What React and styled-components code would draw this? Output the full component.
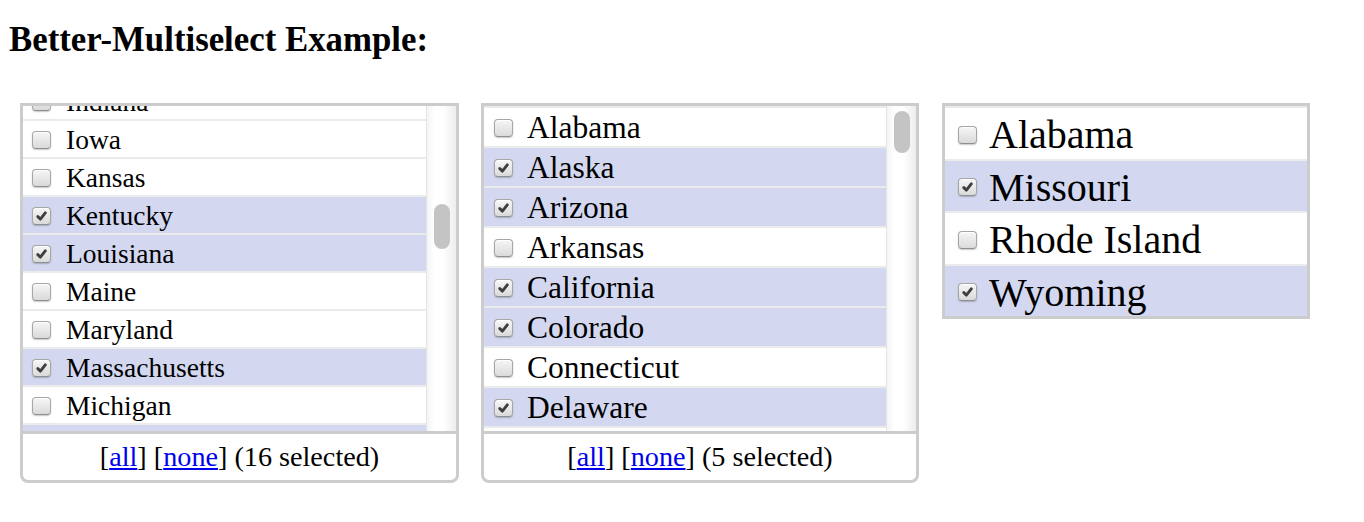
import React, { useLayoutEffect, useRef } from "react";
import styled, { createGlobalStyle } from "styled-components";

const GlobalStyle = createGlobalStyle`
  html, body { margin: 0; padding: 0; background: #ffffff; }
  body {
    font-family: "Liberation Serif", "Times New Roman", serif;
    color: #000000;
  }
`;

const STATES = [
  "Alabama", "Alaska", "Arizona", "Arkansas", "California", "Colorado",
  "Connecticut", "Delaware", "District of Columbia", "Florida", "Georgia",
  "Hawaii", "Idaho", "Illinois", "Indiana", "Iowa", "Kansas", "Kentucky",
  "Louisiana", "Maine", "Maryland", "Massachusetts", "Michigan", "Minnesota",
  "Mississippi", "Missouri", "Montana", "Nebraska", "Nevada", "New Hampshire",
  "New Jersey", "New Mexico", "New York", "North Carolina", "North Dakota",
  "Ohio", "Oklahoma", "Oregon", "Pennsylvania", "Rhode Island",
  "South Carolina", "South Dakota", "Tennessee", "Texas", "Utah", "Vermont",
  "Virginia", "Washington", "West Virginia", "Wisconsin", "Wyoming",
];

const LEFT_SELECTED = new Set([
  "Alaska", "California", "Florida", "Georgia", "Kentucky", "Louisiana",
  "Massachusetts", "Minnesota", "New York", "Ohio", "Oregon", "Texas",
  "Utah", "Vermont", "Washington", "Wyoming",
]);
const MIDDLE_SELECTED = new Set(["Alaska", "Arizona", "California", "Colorado", "Delaware"]);
const RIGHT_OPTIONS = ["Alabama", "Missouri", "Rhode Island", "Wyoming"];
const RIGHT_SELECTED = new Set(["Missouri", "Wyoming"]);

const Page = styled.div`
  padding: 20px 0 0 9px;
`;

const Title = styled.h2`
  margin: 0 0 43px;
  font-size: 34.8px;
  font-weight: bold;
  line-height: normal;
`;

const PanelRow = styled.div`
  display: flex;
  align-items: flex-start;
  padding-left: 11px;
`;

const Panel = styled.div`
  box-sizing: border-box;
  width: ${(p) => p.$width}px;
  margin-right: ${(p) => p.$gap || 0}px;
  border: 3px solid #cccccc;
  border-radius: ${(p) => (p.$rounded ? "0 0 8px 8px" : "0")};
  background: #ffffff;
  overflow: hidden;
`;

const Viewport = styled.div`
  display: flex;
  height: ${(p) => p.$height}px;
`;

const ListClip = styled.div`
  flex: 1;
  height: 100%;
  overflow: hidden;
`;

const OptionList = styled.ul`
  list-style: none;
  margin: 0;
  padding: 0;
`;

const Option = styled.li`
  box-sizing: border-box;
  display: flex;
  align-items: center;
  height: ${(p) => p.$rowHeight}px;
  padding: ${(p) => p.$padTop || 0}px 0 0 ${(p) => p.$padLeft}px;
  border-top: 2px solid #ebebeb;
  background: ${(p) => (p.$selected ? "#d3d8f0" : "#ffffff")};
  font-size: ${(p) => p.$fontSize}px;
  line-height: normal;
  white-space: nowrap;
`;

const Box = styled.span`
  box-sizing: border-box;
  flex: none;
  display: inline-flex;
  align-items: center;
  justify-content: center;
  width: 19px;
  height: 18px;
  margin-right: ${(p) => p.$gap}px;
  border: 1px solid #a6a6a6;
  border-bottom-color: #8f8f8f;
  border-radius: 4px;
  background: linear-gradient(#f6f6f6, #dadada);
  box-shadow: 0 1px 1.5px rgba(0, 0, 0, 0.22), inset 0 1px 0 #ffffff;
`;

const ScrollTrack = styled.div`
  position: relative;
  flex: none;
  box-sizing: border-box;
  width: 30px;
  height: 100%;
  border-left: 1px solid #e4e4e4;
  background: linear-gradient(to right, #f4f4f4, #ffffff 25%, #ffffff 55%, #ededed);
`;

const Thumb = styled.div`
  position: absolute;
  left: 7px;
  right: 6px;
  border-radius: 8px;
  background: #c4c4c4;
`;

const Footer = styled.div`
  box-sizing: border-box;
  display: flex;
  align-items: center;
  justify-content: center;
  height: 49px;
  border-top: 3px solid #cccccc;
  font-size: 28.2px;
  line-height: normal;
  white-space: pre;
`;

const Link = styled.a`
  color: #0000ee;
  text-decoration: underline;
  cursor: pointer;
`;

function Check({ checked }) {
  if (!checked) return null;
  return (
    <svg width="11" height="10" viewBox="0 0 11 10" aria-hidden="true">
      <path
        d="M1.8 5.6 L4.4 8.1 L9.3 1.8"
        fill="none"
        stroke="#3f3f3f"
        strokeWidth="2.9"
        strokeLinecap="round"
        strokeLinejoin="round"
      />
    </svg>
  );
}

function Multiselect({ width, gap, options, selected, rowHeight, fontSize, padLeft, boxGap, scrollTop = 0, viewport, padTop }) {
  const clipRef = useRef(null);
  useLayoutEffect(() => {
    if (clipRef.current) clipRef.current.scrollTop = scrollTop;
  }, [scrollTop]);

  const content = options.length * rowHeight;
  const fullThumb = (viewport * viewport) / content;
  const frac = scrollTop / (content - viewport);
  const inset = 5;
  const thumbTop = frac * (viewport - fullThumb) + inset;
  const thumbHeight = fullThumb - inset * 2;
  const count = options.filter((o) => selected.has(o)).length;

  return (
    <Panel $width={width} $gap={gap} $rounded>
      <Viewport $height={viewport}>
        <ListClip ref={clipRef}>
          <OptionList>
            {options.map((name) => (
              <Option
                key={name}
                $selected={selected.has(name)}
                $rowHeight={rowHeight}
                $fontSize={fontSize}
                $padLeft={padLeft}
                $padTop={padTop}
              >
                <Box $gap={boxGap}>
                  <Check checked={selected.has(name)} />
                </Box>
                {name}
              </Option>
            ))}
          </OptionList>
        </ListClip>
        <ScrollTrack>
          <Thumb style={{ top: thumbTop, height: thumbHeight }} />
        </ScrollTrack>
      </Viewport>
      <Footer>
        [<Link>all</Link>] [<Link>none</Link>] ({count} selected)
      </Footer>
    </Panel>
  );
}

function StaticSelect({ width, options, selected }) {
  return (
    <Panel $width={width}>
      <OptionList>
        {options.map((name) => (
          <Option
            key={name}
            $selected={selected.has(name)}
            $rowHeight={52.5}
            $fontSize={40}
            $padLeft={13}
            $padTop={3}
          >
            <Box $gap={12}>
              <Check checked={selected.has(name)} />
            </Box>
            {name}
          </Option>
        ))}
      </OptionList>
    </Panel>
  );
}

export default function App() {
  return (
    <>
      <GlobalStyle />
      <Page>
        <Title>Better-Multiselect Example:</Title>
        <PanelRow>
          <Multiselect
            width={439}
            gap={22}
            options={STATES}
            selected={LEFT_SELECTED}
            rowHeight={38}
            fontSize={27.5}
            padLeft={9}
            boxGap={15}
            scrollTop={557}
            viewport={325}
            padTop={1}
          />
          <Multiselect
            width={438}
            gap={23}
            options={STATES}
            selected={MIDDLE_SELECTED}
            rowHeight={40}
            fontSize={31.5}
            padLeft={10}
            boxGap={14}
            scrollTop={0}
            viewport={325}
            padTop={1}
          />
          <StaticSelect width={368} options={RIGHT_OPTIONS} selected={RIGHT_SELECTED} />
        </PanelRow>
      </Page>
    </>
  );
}
